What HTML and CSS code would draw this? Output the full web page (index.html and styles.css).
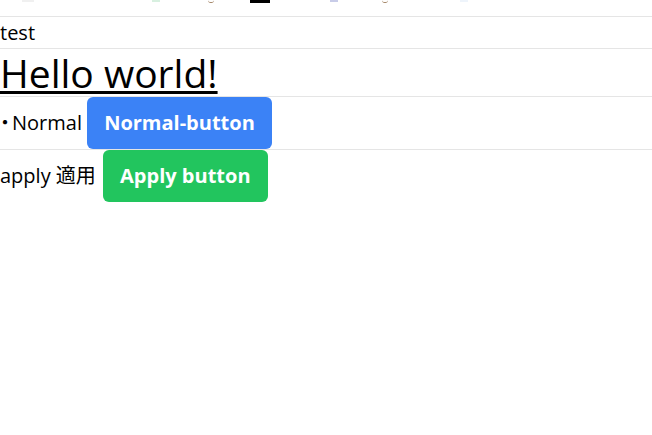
FILE: index.html
```html
<!DOCTYPE html>
<html lang="ja">
<head>
    <meta charset="UTF-8">
    <meta name="viewport" content="width=device-width, initial-scale=1.0">
    <title>test</title>
    <link rel="stylesheet" href="styles.css">
</head>
<body>
    <div class="toolbar">
        <span class="bit bit-gray"></span>
        <span class="bit bit-green"></span>
        <span class="bit bit-hook"></span>
        <span class="bit bit-black"></span>
        <span class="bit bit-blue"></span>
        <span class="bit bit-hook2"></span>
        <span class="bit bit-sky"></span>
    </div>

    <div class="row row-test">test</div>

    <div class="row row-title">
        <h1><a href="#">Hello world!</a></h1>
    </div>

    <div class="row row-btn">
        <span class="dot">・</span>Normal <button class="btn btn-blue">Normal-button</button>
    </div>

    <div class="row row-btn row-last">
        apply 適用 <button class="btn btn-green">Apply button</button>
    </div>
</body>
</html>
```

FILE: styles.css
```css
body {
    margin: 0;
    font-family: "Open Sans", "Noto Sans CJK JP", sans-serif;
    color: #000;
    background: #fff;
}
.toolbar {
    height: 16px;
    display: flex;
    align-items: flex-start;
}
.bit {
    display: block;
    height: 2px;
}
.bit-gray {
    margin-left: 22px;
    width: 12px;
    background: #f0f0f0;
}
.bit-green {
    margin-left: 118px;
    width: 8px;
    background: #d8f0e0;
}
.bit-hook {
    margin-left: 48px;
    width: 6px;
    height: 2px;
    border-bottom: 1px solid #a08060;
    border-radius: 0 0 4px 4px;
    background: none;
}
.bit-black {
    margin-left: 36px;
    width: 20px;
    height: 3px;
    background: #000;
}
.bit-blue {
    margin-left: 60px;
    width: 8px;
    background: #c8cce8;
}
.bit-hook2 {
    margin-left: 44px;
    width: 6px;
    height: 2px;
    border-bottom: 1px solid #a08060;
    border-radius: 0 0 4px 4px;
}
.bit-sky {
    margin-left: 72px;
    width: 8px;
    background: #eef4fb;
}
.row {
    border-top: 1px solid #e5e5e5;
    font-size: 20px;
}
.row-test {
    height: 31px;
    line-height: 31px;
}
.row-title {
    height: 47px;
}
.row-title h1 {
    margin: 0;
    font-size: 39px;
    font-weight: normal;
    line-height: 47px;
}
.row-title a {
    color: #000;
    text-decoration: underline;
    text-decoration-thickness: 3px;
    text-underline-offset: 3px;
}
.row-btn {
    line-height: 28px;
}
.dot {
    font-feature-settings: "palt";
    margin-right: 2px;
}
.btn {
    font-family: inherit;
    font-size: 20px;
    font-weight: bold;
    line-height: 28px;
    color: #fff;
    border: none;
    border-radius: 6px;
    padding: 12px 17px;
    cursor: pointer;
}
.btn-blue {
    background-color: #3b82f6;
}
.btn-green {
    margin-left: 2px;
    background-color: #22c55e;
}
```
